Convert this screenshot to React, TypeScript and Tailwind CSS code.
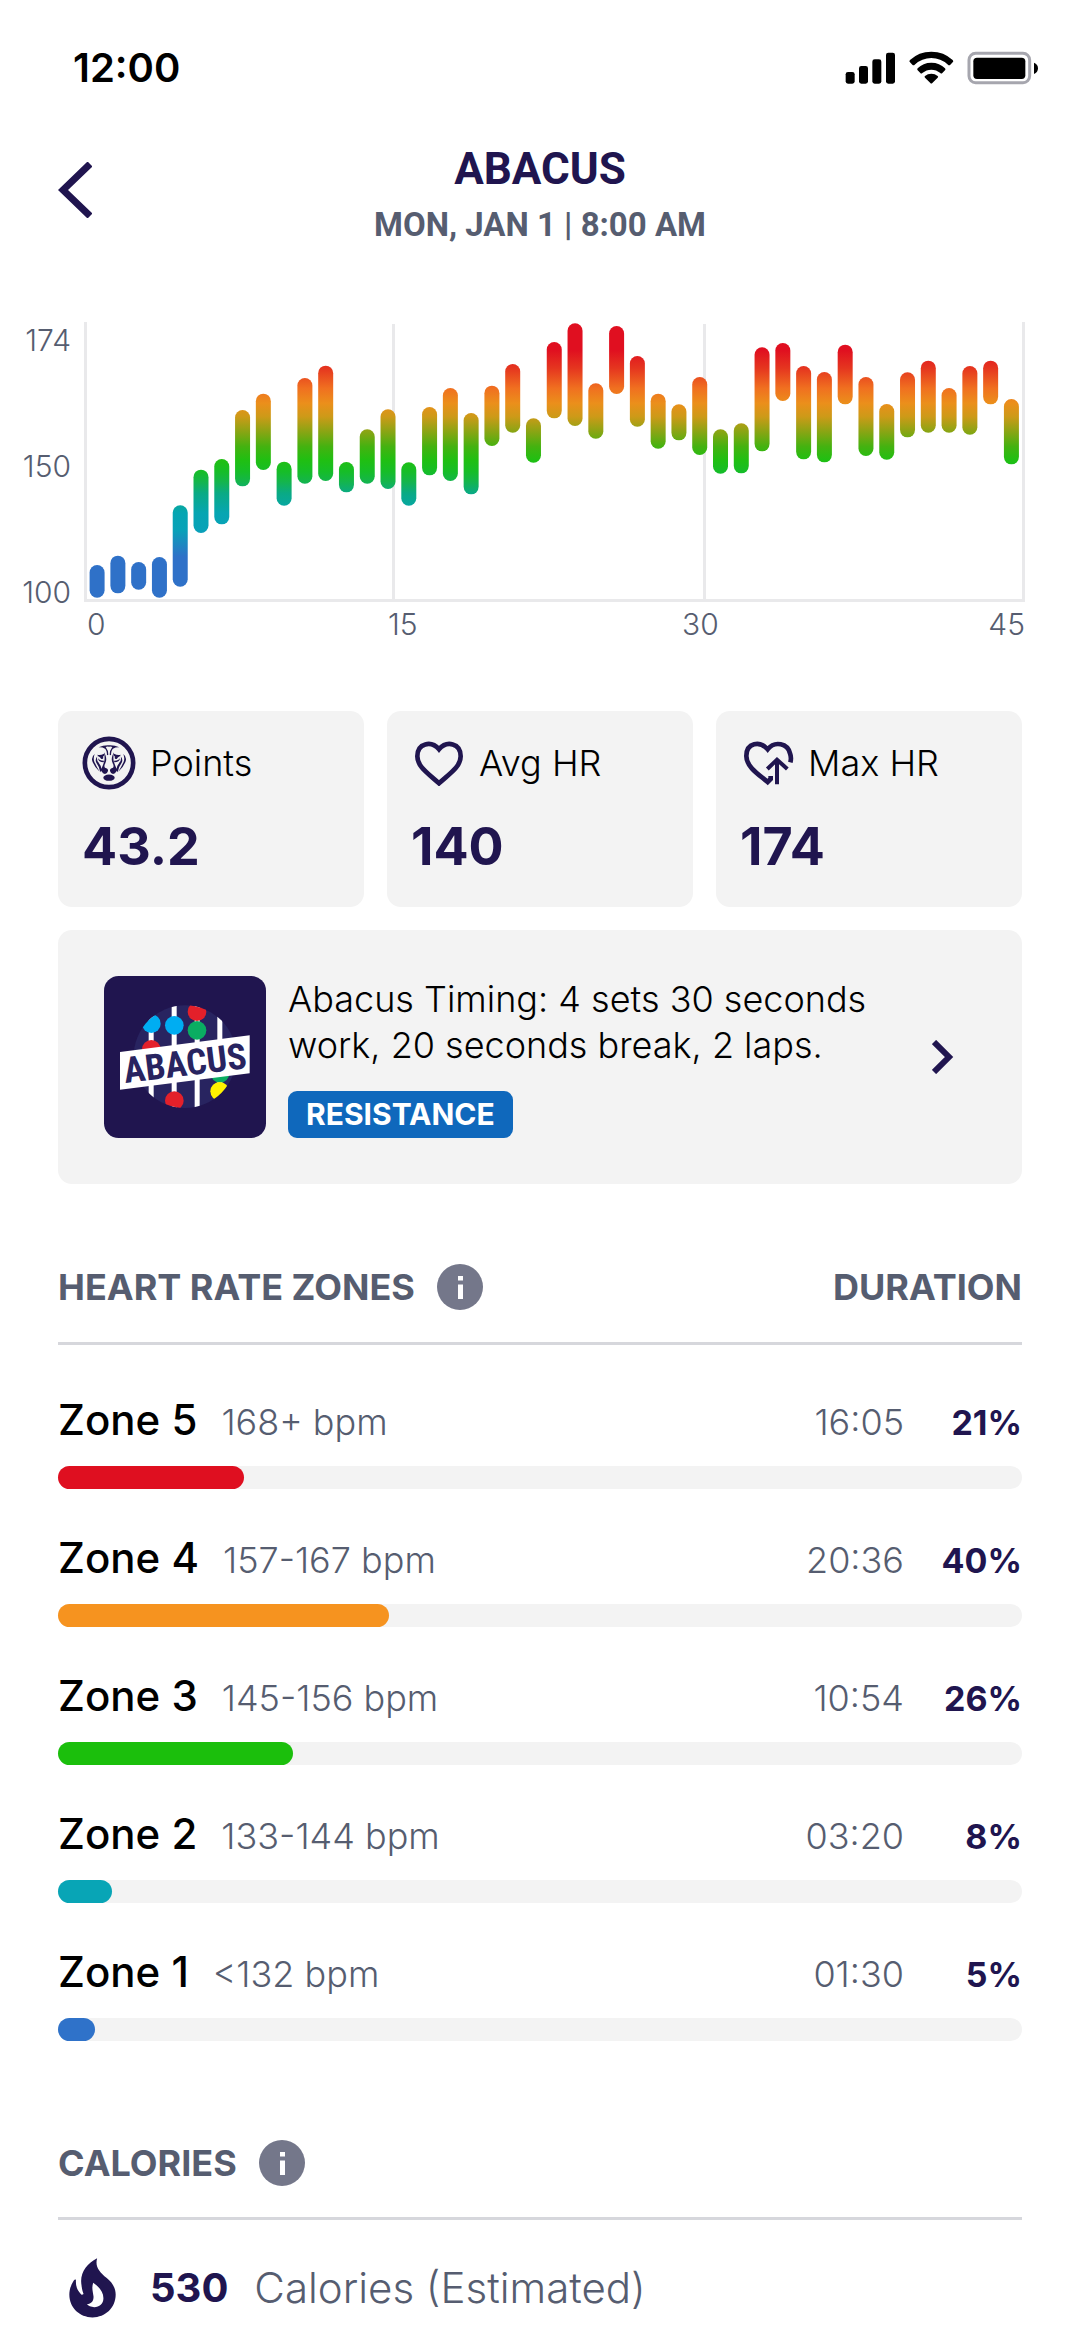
import React from "react";

const SAMPLES: [number, number][] = [
  [795, 893], [767, 880], [786, 869], [771, 893], [616, 860], [509, 699], [477, 673], [330, 559], [281, 510],
  [485, 617], [234, 551], [197, 543], [486, 577], [388, 551], [328, 567], [487, 617], [321, 526], [264, 543],
  [339, 583], [257, 438], [192, 398], [355, 488], [126, 355], [70, 378], [250, 416], [78, 282], [168, 380],
  [281, 446], [313, 421], [231, 465], [388, 521], [370, 520], [142, 454], [129, 303], [198, 478], [216, 487],
  [134, 313], [231, 468], [312, 479], [217, 412], [182, 398], [264, 398], [198, 404], [182, 313], [297, 493],
];

const STOPS: [number, string][] = [
  [66, "#e00f20"], [150, "#e00f20"], [205, "#e5361f"], [265, "#f07020"], [310, "#eb8f1b"], [350, "#cd9a18"],
  [400, "#82a613"], [440, "#44b210"], [480, "#20bf12"], [515, "#16bd28"], [545, "#14b54c"], [580, "#0aaa85"],
  [640, "#06a5b2"], [690, "#08a2b8"], [770, "#2f71c8"], [906, "#2f71c8"],
];

const ZONES = [
  { name: "Zone 5", range: "168+ bpm", time: "16:05", pct: "21%", width: "19.3%", color: "bg-[#df0f20]" },
  { name: "Zone 4", range: "157-167 bpm", time: "20:36", pct: "40%", width: "34.3%", color: "bg-[#f6931f]" },
  { name: "Zone 3", range: "145-156 bpm", time: "10:54", pct: "26%", width: "24.4%", color: "bg-[#1bbf0c]" },
  { name: "Zone 2", range: "133-144 bpm", time: "03:20", pct: "8%", width: "5.6%", color: "bg-[#08a5b6]" },
  { name: "Zone 1", range: "<132 bpm", time: "01:30", pct: "5%", width: "3.8%", color: "bg-[#2f72c9]" },
];

function StatusIcons() {
  return (
    <svg className="h-[34px] w-[194px]" viewBox="45 42 582 102" aria-hidden="true">
      <rect x="47" y="105" width="27" height="35" rx="7" />
      <rect x="87" y="87" width="27" height="53" rx="7" />
      <rect x="127" y="67" width="27" height="73" rx="7" />
      <rect x="168" y="47" width="27" height="93" rx="7" />
      <path d="M304 44q38 0 64 25q4 4 0 7l-7 7q-4 3-7 0q-22-20-50-20t-50 20q-3 3-7 0l-7-7q-4-3 0-7q26-25 64-25z" />
      <path d="M304 77q25 0 41 17q3 3 0 6l-8 8q-3 3-6 0q-12-10-27-10t-27 10q-3 3-6 0l-8-8q-3-3 0-6q16-17 41-17z" />
      <path d="M304 110q11 0 19 7q3 2 0 5l-16 16q-3 3-6 0l-16-16q-3-3 0-5q8-7 19-7z" />
      <rect x="417" y="49" width="182" height="88" rx="20" fill="none" stroke="#a6a6ae" strokeWidth="9" />
      <rect x="430" y="62" width="156" height="64" rx="11" />
      <path d="M612 77q12 5 12 17t-12 17z" />
    </svg>
  );
}

function Chart() {
  const px = (v: number) => v / 3 - 22;
  return (
    <svg className="block w-full" viewBox="0 0 941 280" role="img" aria-label="Heart rate over time">
      <defs>
        <linearGradient id="hr" gradientUnits="userSpaceOnUse" x1="0" y1="0" x2="0" y2="280">
          {STOPS.map(([y, c]) => (
            <stop key={y} offset={px(y) / 280} stopColor={c} />
          ))}
        </linearGradient>
      </defs>
      <g fill="#e9e9eb">
        <rect x="0" y="0" width="3" height="280" />
        <rect x="308" y="2" width="3" height="276" />
        <rect x="619" y="2" width="3" height="276" />
        <rect x="938" y="0" width="3" height="280" />
        <rect x="0" y="277" width="941" height="3" />
      </g>
      {SAMPLES.map(([top, bottom], i) => (
        <rect key={i} x={5.6 + i * 20.78} y={px(top)} width="15" height={(bottom - top) / 3} rx="7.5" fill="url(#hr)" />
      ))}
    </svg>
  );
}

function LionIcon() {
  const half = (
    <>
      <path d="M177 143Q192 136 208 137V141Q202 140 198 142Q206 152 206 165L202 167Q202 152 196 147Q188 142 177 143Z" />
      <path d="M194 159L198 168Q202 181 197 191Q192 199 196 204Q206 206 205 214Q203 222 196 223Q188 222 188 218Q182 213 184 208Q188 202 190 196Q192 190 194 184Q196 174 193 159Z" />
      <path d="M173 165Q182 168 193 162V168Q188 170 191 175Q189 180 184 177Q182 173 178 171Q174 169 173 165Z" />
      <path d="M175 175Q180 184 193 183L192 188Q176 188 175 175Z" />
      <path d="M165 163Q154 172 158 185Q163 200 180 216Q170 200 164 186Q160 176 165 163Z" />
      <path d="M173 170Q165 179 170 189Q180 202 182 218Q190 205 176 188Q170 180 173 170Z" />
    </>
  );
  return (
    <svg className="size-[54px]" viewBox="127 109 162 162" fill="#20154f" aria-hidden="true">
      <circle cx="208" cy="190" r="72.5" fill="none" stroke="#20154f" strokeWidth="14" />
      {half}
      <g transform="matrix(-1 0 0 1 416 0)">{half}</g>
      <ellipse cx="208" cy="234" rx="17" ry="9.5" />
    </svg>
  );
}

function HeartIcon({ up = false }: { up?: boolean }) {
  return (
    <svg className="h-[46px] w-[54px]" viewBox="0 0 162 138" fill="none" stroke="#20154f" strokeWidth="14" aria-hidden="true">
      {up ? (
        <>
          <path d="M151 67Q155 53 150 40C143 11 105 1 83 28C60 1 19 8 19 48C19 83 63 108 83 126L92 117V108" />
          <path d="M111 133V62M82 87L111 59L142 87" strokeWidth="12" />
        </>
      ) : (
        <path d="M84 28C61 1 19 9 19 49C19 80 51 100 84 130C117 100 149 80 149 49C149 9 107 1 84 28Z" />
      )}
    </svg>
  );
}

function AbacusLogo() {
  return (
    <svg className="size-[162px] shrink-0" viewBox="10 18 486 486" role="img" aria-label="Abacus">
      <defs>
        <clipPath id="disc">
          <circle cx="253" cy="260" r="154" />
        </clipPath>
      </defs>
      <rect x="10" y="18" width="486" height="486" rx="44" fill="#20154f" />
      <g clipPath="url(#disc)">
        <rect x="90" y="100" width="320" height="320" fill="#282460" />
        <g fill="#fff">
          <rect x="144" y="100" width="15" height="320" />
          <rect x="213" y="100" width="15" height="320" />
          <rect x="282" y="100" width="15" height="320" />
          <rect x="350" y="100" width="15" height="240" />
        </g>
        <circle cx="152" cy="161" r="28" fill="#00adf2" />
        <circle cx="221" cy="166" r="28" fill="#00adf2" />
        <circle cx="289" cy="125" r="28" fill="#e3202a" />
        <circle cx="289" cy="181" r="28" fill="#0aad62" />
        <circle cx="152" cy="238" r="28" fill="#e3202a" />
        <circle cx="221" cy="392" r="28" fill="#e3202a" />
        <circle cx="358" cy="310" r="28" fill="#0aad62" />
        <circle cx="357" cy="364" r="28" fill="#fff200" />
      </g>
      <path d="M58 246L447 196V310L58 359Z" fill="#fff" />
      <text
        x="253"
        y="317"
        textAnchor="middle"
        transform="rotate(-7 253 278)"
        className="fill-[#282460] font-['Liberation_Sans_Narrow','Roboto_Condensed','Open_Sans_Condensed','Roboto',sans-serif] text-[108px] font-bold"
      >
        ABACUS
      </text>
    </svg>
  );
}

function InfoButton({ label }: { label: string }) {
  return (
    <button type="button" aria-label={label} className="size-[46px] shrink-0">
      <svg viewBox="0 0 46 46" aria-hidden="true">
        <circle cx="23" cy="23" r="23" fill="#74778a" />
        <path d="M21 12h5v4.500h-5zM21 20.500h5V35h-5z" fill="#fff" />
      </svg>
    </button>
  );
}

function Stat({ icon, label, value }: { icon: React.ReactNode; label: string; value: string }) {
  return (
    <div className="rounded-[14px] bg-[#f3f3f3] px-6 pt-6 pb-[30px]">
      <div className="flex h-14 items-center gap-[14px]">
        {icon}
        <span className="text-[36px] leading-10 whitespace-nowrap text-black">{label}</span>
      </div>
      <div className="mt-[26px] text-[52px] leading-[60px] font-bold text-[#20154f]">{value}</div>
    </div>
  );
}

export default function App() {
  return (
    <main className="min-h-screen bg-white pb-5 font-['Inter',sans-serif] font-[350] text-[#565d70]">
      <div className="flex h-[92px] items-center justify-between pt-11 pr-[41px] pl-[73px] text-black">
        <span className="text-[40px] leading-[48px] font-semibold">12:00</span>
        <StatusIcons />
      </div>

      <header className="mt-[53px] grid grid-cols-[1fr_auto_1fr] items-start px-[58px] font-['Roboto',sans-serif]">
        <button type="button" aria-label="Back" className="mt-[17px] w-9">
          <svg className="h-[56px] w-[34px]" viewBox="0 0 34 56" fill="none" stroke="#20154f" strokeWidth="7" aria-hidden="true">
            <path d="M32 2L5 28L32 54" />
          </svg>
        </button>
        <div className="text-center font-bold">
          <h1 className="text-[44px] leading-[48px] text-[#20154f]">ABACUS</h1>
          <p className="mt-3 text-[33px] leading-10">MON, JAN 1 | 8:00 AM</p>
        </div>
      </header>

      <section className="mt-[77px] flex gap-[13px] pr-[55px] text-[30px] leading-9">
        <div className="flex h-[288px] w-[71px] shrink-0 flex-col justify-between text-right">
          <span>174</span>
          <span>150</span>
          <span>100</span>
        </div>
        <div className="min-w-0 flex-1">
          <Chart />
          <div className="mt-1 grid grid-cols-[301fr_294fr_343fr] pl-[3px]">
            <span>0</span>
            <span>15</span>
            <span className="flex justify-between">
              <span>30</span>
              <span>45</span>
            </span>
          </div>
        </div>
      </section>

      <div className="mt-[69px] px-[58px]">
        <section className="grid grid-cols-3 gap-[23px]">
          <Stat icon={<LionIcon />} label="Points" value="43.2" />
          <Stat icon={<HeartIcon />} label="Avg HR" value="140" />
          <Stat icon={<HeartIcon up />} label="Max HR" value="174" />
        </section>

        <a href="#workout" className="mt-[23px] flex items-center rounded-[14px] bg-[#f3f3f3] py-[46px] pr-[68px] pl-[46px]">
          <AbacusLogo />
          <div className="ml-[22px] flex-1">
            <p className="text-[36px] leading-[46px] text-black">
              Abacus Timing: 4 sets 30 seconds
              <br />
              work, 20 seconds break, 2 laps.
            </p>
            <span className="mt-[23px] inline-block rounded-[9px] bg-[#0f68bc] px-[18px] text-[30px] leading-[47px] font-bold text-white">
              RESISTANCE
            </span>
          </div>
          <svg className="h-[34px] w-[22px]" viewBox="0 0 22 34" fill="none" stroke="#20154f" strokeWidth="6" aria-hidden="true">
            <path d="M2 2L17 17L2 32" />
          </svg>
        </a>

        <section>
          <div className="mt-20 flex items-center border-b-[3px] border-[#d6d7dc] pb-8">
            <h2 className="text-[36px] leading-10 font-bold">HEART RATE ZONES</h2>
            <div className="ml-[22px] flex flex-1">
              <InfoButton label="About heart rate zones" />
            </div>
            <h2 className="text-[36px] leading-10 font-bold">DURATION</h2>
          </div>
          <ul className="mt-[53px] flex flex-col gap-[47px]">
            {ZONES.map((z) => (
              <li key={z.name}>
                <div className="flex h-[44px] items-baseline text-[36px] leading-[44px] whitespace-nowrap">
                  <span className="text-[42px] font-medium text-black">{z.name}</span>
                  <span className="ml-6 flex-1">{z.range}</span>
                  <span>{z.time}</span>
                  <span className="w-[118px] text-right text-[34px] font-bold text-[#20154f]">{z.pct}</span>
                </div>
                <div className="mt-6 h-[23px] rounded-full bg-[#f3f3f3]">
                  <div className={"h-full rounded-full " + z.color} style={{ width: z.width }} />
                </div>
              </li>
            ))}
          </ul>
        </section>

        <section>
          <div className="mt-[99px] flex items-center gap-[22px] border-b-[3px] border-[#d6d7dc] pb-[31px]">
            <h2 className="text-[36px] leading-10 font-bold">CALORIES</h2>
            <InfoButton label="About calories" />
          </div>
          <div className="mt-9 flex h-16 items-center text-[40px] leading-[48px] whitespace-nowrap">
            <svg className="ml-[11px] h-[60px] w-[47px]" viewBox="56 57 142 180" fill="#20154f" aria-hidden="true">
              <path
                fillRule="evenodd"
                d="M141 57C108 74 87 103 94 140C95 151 98 160 100 165Q94 170 91 164C79 151 76 139 77 122Q74 120 70 125C62 137 57 152 57 167C57 207 88 236 127 236S197 207 197 167C197 146 186 130 170 117C147 98 134 82 141 57ZM129 131C147 143 160 159 160 178C160 194 148 205 132 205Q117 204 110 197C125 193 131 185 130 172C128 157 124 147 129 131Z"
              />
            </svg>
            <strong className="ml-[34px] font-bold text-[#20154f]">530</strong>
            <span className="ml-[26px] text-[42px]">Calories (Estimated)</span>
          </div>
        </section>
      </div>
    </main>
  );
}
